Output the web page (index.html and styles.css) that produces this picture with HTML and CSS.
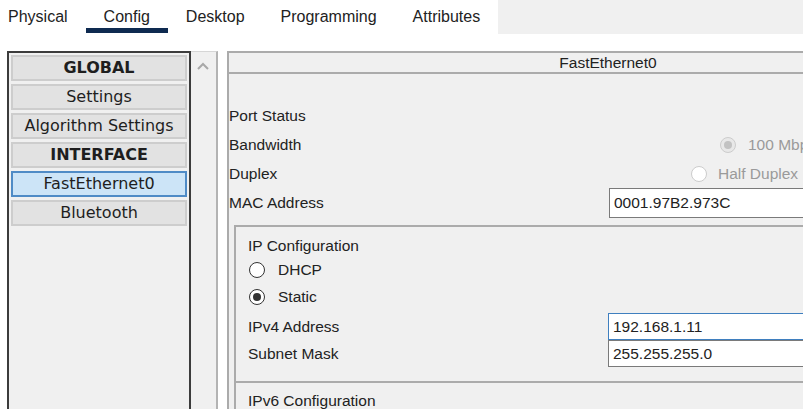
FILE: index.html
```html
<!DOCTYPE html>
<html>
<head>
<meta charset="utf-8">
<link rel="stylesheet" href="styles.css">
</head>
<body>
<div class="tabs">
  <div class="tab-strip">
    <span class="tab">Physical</span>
    <span class="tab active">Config</span>
    <span class="tab">Desktop</span>
    <span class="tab">Programming</span>
    <span class="tab">Attributes</span>
  </div>
  <div class="tab-fill"></div>
</div>
<div class="main">
  <div class="list">
    <div class="item bold">GLOBAL</div>
    <div class="item">Settings</div>
    <div class="item">Algorithm Settings</div>
    <div class="item bold">INTERFACE</div>
    <div class="item sel">FastEthernet0</div>
    <div class="item">Bluetooth</div>
  </div>
  <div class="scrollbar">
    <svg class="chev" width="14" height="9" viewBox="0 0 14 9"><path d="M2 7 L7 2 L12 7" fill="none" stroke="#a8a8a8" stroke-width="2"/></svg>
  </div>
  <div class="panel">
    <div class="panel-head">FastEthernet0</div>
    <div class="panel-body">
      <div class="row"><span class="label">Port Status</span></div>
      <div class="row"><span class="label">Bandwidth</span><span class="opt opt-bw"><span class="radio dis checked"></span><span class="opt-text">100 Mbps</span></span></div>
      <div class="row"><span class="label">Duplex</span><span class="opt opt-dup"><span class="radio dis"></span><span class="opt-text">Half Duplex</span></span></div>
      <div class="row"><span class="label">MAC Address</span><div class="field">0001.97B2.973C</div></div>
      <div class="group">
        <div class="group-title">IP Configuration</div>
        <div class="radio-row"><span class="radio"></span><span>DHCP</span></div>
        <div class="radio-row"><span class="radio checked"></span><span>Static</span></div>
        <div class="grow first"><span class="glabel">IPv4 Address</span><div class="field gfield focus">192.168.1.11</div></div>
        <div class="grow"><span class="glabel">Subnet Mask</span><div class="field gfield">255.255.255.0</div></div>
      </div>
      <div class="group group6">
        <div class="group-title">IPv6 Configuration</div>
      </div>
    </div>
  </div>
</div>
</body>
</html>
```
FILE: styles.css
```css
html, body {
  margin: 0;
  padding: 0;
}
body {
  width: 803px;
  height: 409px;
  overflow: hidden;
  background: #ffffff;
  font-family: "Liberation Sans", Arial, sans-serif;
  font-size: 15.5px;
  color: #222222;
}

.tabs {
  display: flex;
  height: 34px;
}
.tab-strip {
  display: flex;
  width: 498px;
  flex: none;
}
.tab {
  position: relative;
  padding: 0 18px;
  line-height: 34px;
  font-size: 16px;
  color: #222;
}
.tab:first-child {
  padding-left: 8px;
}
.tab.active::after {
  content: "";
  position: absolute;
  left: 0;
  right: 0;
  top: 28px;
  height: 5px;
  background: #0e2a50;
}
.tab-fill {
  flex: 1;
  background: #f0f0f0;
}

.main {
  display: flex;
  margin-top: 17px;
  padding-left: 7px;
  height: 400px;
}

.list {
  width: 184px;
  flex: none;
  box-sizing: border-box;
  border: 2px solid #3c3c3c;
  border-bottom: none;
  background: #f0f0f0;
  padding: 2px;
  display: flex;
  flex-direction: column;
  gap: 3px;
}
.item {
  height: 26px;
  box-sizing: border-box;
  border: 2px solid #cdcdcd;
  background: #e2e2e2;
  font-family: "DejaVu Sans", Verdana, sans-serif;
  font-size: 16px;
  line-height: 22px;
  text-align: center;
  color: #1e1e1e;
  white-space: nowrap;
}
.item.bold {
  font-weight: bold;
}
.item.sel {
  background: #cce4f7;
  border-color: #4f8bc6;
}

.scrollbar {
  width: 27px;
  flex: none;
  box-sizing: border-box;
  background: #f0f0f0;
  border-top: 1px solid #d6d6d6;
  border-right: 2px solid #b3b3b3;
  display: flex;
  justify-content: center;
  align-items: flex-start;
}
.chev {
  margin-top: 10px;
  margin-right: 2px;
}

.panel {
  margin-left: 9px;
  width: 762px;
  flex: none;
  box-sizing: border-box;
  border: 2px solid #ababab;
  border-bottom: none;
  background: #f0f0f0;
}
.panel-head {
  height: 19px;
  line-height: 19px;
  text-align: center;
  border-bottom: 2px solid #ababab;
}
.panel-body {
  padding-top: 27px;
}
.row {
  display: flex;
  align-items: center;
  height: 29px;
}
.label {
  width: 380px;
  flex: none;
}
.opt {
  display: flex;
  align-items: center;
  color: #9a9a9a;
  white-space: nowrap;
}
.opt-bw {
  margin-left: 111px;
}
.opt-bw .opt-text {
  margin-left: 12px;
}
.opt-dup {
  margin-left: 82px;
}
.opt-dup .opt-text {
  margin-left: 11px;
}

.radio {
  position: relative;
  width: 16px;
  height: 16px;
  box-sizing: border-box;
  border: 1px solid #333;
  border-radius: 50%;
  background: #fff;
  flex: none;
}
.radio.checked::after {
  content: "";
  position: absolute;
  left: 3px;
  top: 3px;
  width: 8px;
  height: 8px;
  border-radius: 50%;
  background: #333;
}
.radio.dis {
  border-color: #cccccc;
  background: #ffffff;
}
.radio.dis.checked {
  background: #e8e8e8;
}
.radio.dis.checked::after {
  background: #c2c2c2;
}

.field {
  width: 300px;
  height: 30px;
  box-sizing: border-box;
  border: 1px solid #7a7a7a;
  background: #ffffff;
  padding-left: 4px;
  line-height: 28px;
  flex: none;
}

.group {
  margin: 8px 0 0 5px;
  border: 2px solid #ababab;
  padding: 9px 0 14px 12px;
}
.group-title {
  height: 20px;
  line-height: 20px;
}
.radio-row {
  display: flex;
  align-items: center;
  height: 27px;
}
.radio-row + .radio-row {
  height: 28px;
}
.radio-row .radio {
  margin-left: 1px;
  margin-right: 13px;
}
.grow {
  display: flex;
  align-items: center;
  height: 27px;
}
.grow.first {
  margin-top: 2px;
}
.glabel {
  width: 360px;
  flex: none;
}
.gfield {
  height: 27px;
  line-height: 25px;
}
.gfield.focus {
  border-color: #3f7fbf;
}
.group6 {
  margin-top: 0;
  border-top: none;
  padding-top: 8px;
}
```
